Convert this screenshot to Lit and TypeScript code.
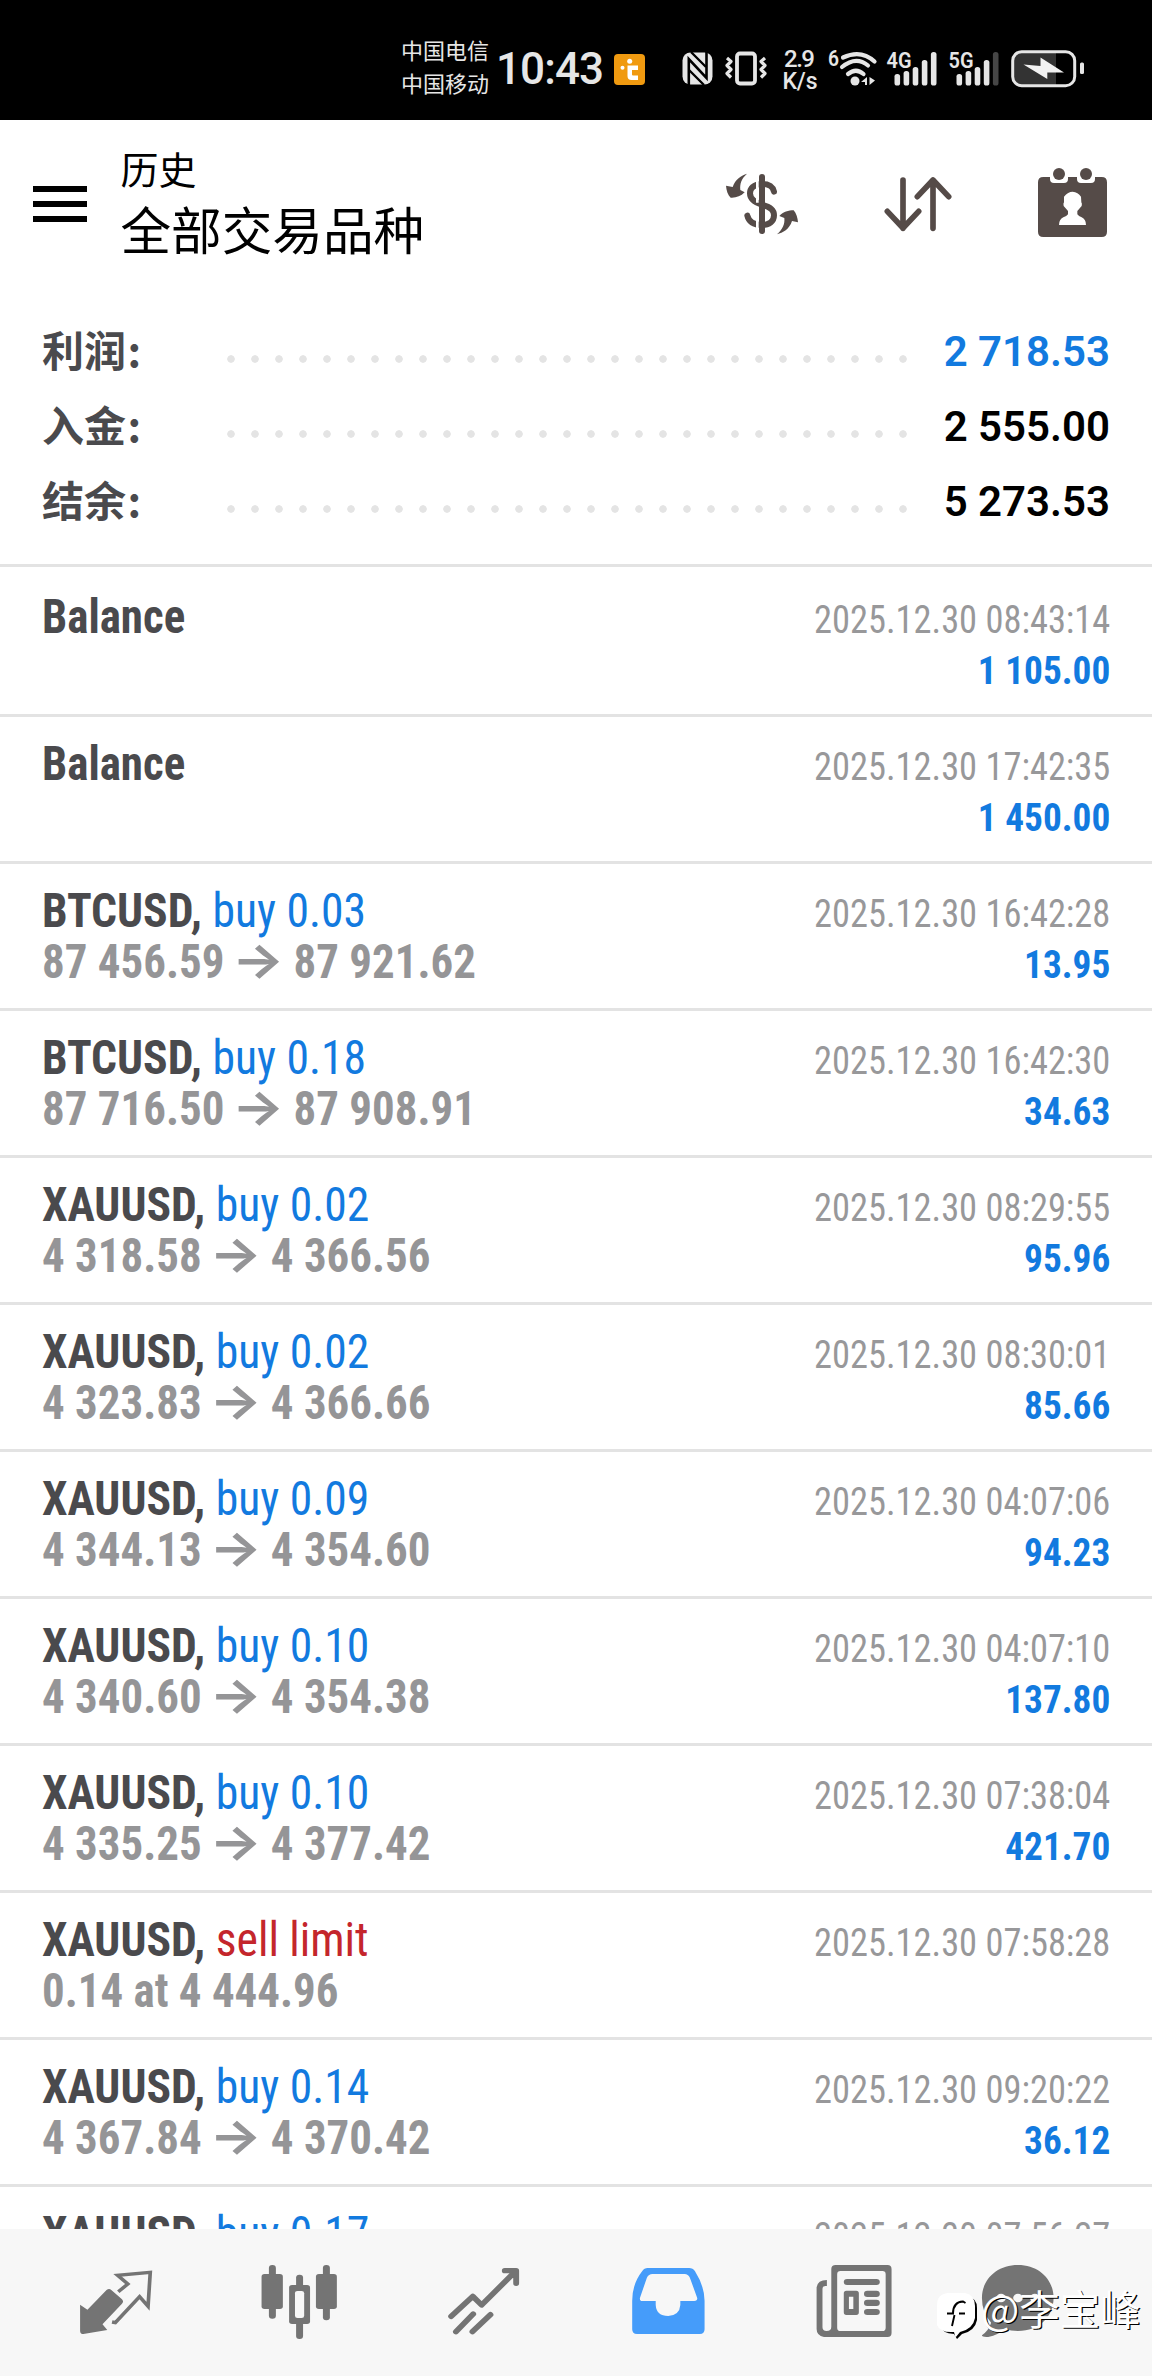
import { LitElement, html, css, svg, nothing } from "lit";
import { customElement } from "lit/decorators.js";

interface Deal {
  symbol: string;
  op?: string;
  sell?: boolean;
  open?: string;
  close?: string;
  note?: string;
  time: string;
  amount?: string;
}

const DEALS: Deal[] = [
  { symbol: "Balance", time: "2025.12.30 08:43:14", amount: "1 105.00" },
  { symbol: "Balance", time: "2025.12.30 17:42:35", amount: "1 450.00" },
  { symbol: "BTCUSD,", op: "buy 0.03", open: "87 456.59", close: "87 921.62", time: "2025.12.30 16:42:28", amount: "13.95" },
  { symbol: "BTCUSD,", op: "buy 0.18", open: "87 716.50", close: "87 908.91", time: "2025.12.30 16:42:30", amount: "34.63" },
  { symbol: "XAUUSD,", op: "buy 0.02", open: "4 318.58", close: "4 366.56", time: "2025.12.30 08:29:55", amount: "95.96" },
  { symbol: "XAUUSD,", op: "buy 0.02", open: "4 323.83", close: "4 366.66", time: "2025.12.30 08:30:01", amount: "85.66" },
  { symbol: "XAUUSD,", op: "buy 0.09", open: "4 344.13", close: "4 354.60", time: "2025.12.30 04:07:06", amount: "94.23" },
  { symbol: "XAUUSD,", op: "buy 0.10", open: "4 340.60", close: "4 354.38", time: "2025.12.30 04:07:10", amount: "137.80" },
  { symbol: "XAUUSD,", op: "buy 0.10", open: "4 335.25", close: "4 377.42", time: "2025.12.30 07:38:04", amount: "421.70" },
  { symbol: "XAUUSD,", op: "sell limit", sell: true, note: "0.14 at 4 444.96", time: "2025.12.30 07:58:28" },
  { symbol: "XAUUSD,", op: "buy 0.14", open: "4 367.84", close: "4 370.42", time: "2025.12.30 09:20:22", amount: "36.12" },
  { symbol: "XAUUSD,", op: "buy 0.17", time: "2025.12.30 07:56:27" },
];

@customElement("app-root")
export class AppRoot extends LitElement {
  static styles = css`
    :host { display: block; font-family: Roboto, "Noto Sans CJK SC", sans-serif; }
    .page { width: 1152px; height: 2376px; background: #fff; overflow: hidden; display: flex; flex-direction: column; }
    .page > * { flex: none; }
  `;
  render() {
    return html`<div class="page">
      <status-bar></status-bar>
      <history-header></history-header>
      <account-summary></account-summary>
      <deal-list></deal-list>
      <bottom-nav></bottom-nav>
    </div>`;
  }
}

@customElement("status-bar")
export class StatusBar extends LitElement {
  static styles = css`
    :host { display: block; height: 120px; background: #000; color: #e6e6e6; font-family: Roboto, "Noto Sans CJK SC", sans-serif; }
    svg { display: block; overflow: visible; }
    .bar { display: flex; height: 120px; padding: 17px 0 0 401px; box-sizing: border-box; align-items: center; }
    .bar > * { flex: none; }
    .carriers { width: 95px; font: 22px/33px "Noto Sans CJK SC", sans-serif; margin-top: -6px; }
    .clock { width: 118px; font-size: 44px; line-height: 60px; font-weight: 480; letter-spacing: -0.9px; }
    .t { font-family: Roboto, sans-serif; fill: #e6e6e6; }
  `;
  render() {
    const bars = (x: number, dim: boolean) =>
      [[73, 0], [70, 1], [66, 2], [59, 3], [51, 4]].map(([y, i]) =>
        svg`<rect x=${x + i * 9.1} y=${y} width="5.6" height=${84.5 - y} rx="2.6" fill=${dim && i === 4 ? "#464646" : "#e6e6e6"}></rect>`);
    return html`<div class="bar">
      <div class="carriers"><div>中国电信</div><div>中国移动</div></div>
      <div class="clock">10:43</div>
      <svg width="472" height="40" viewBox="614 48 472 40">
        <rect x="614" y="53" width="31" height="31" rx="4" fill="#f09a10"></rect>
        <path d="M627.500 64.500H638V69H632V73.500Q632 74.500 633 74.500H638V79H631.500Q627.500 79 627.500 75z" fill="#fff"></path>
        <circle cx="629.700" cy="60.200" r="2.500" fill="#fff"></circle><circle cx="622.500" cy="66.700" r="2" fill="#fff"></circle>
        <rect x="682.500" y="51.500" width="30" height="32" rx="8" fill="#e6e6e6"></rect>
        <path d="M688.800 84V58L706.500 77V51" fill="none" stroke="#000" stroke-width="2.600"></path>
        <path d="M691 51L706 66M689 69L704 84" fill="none" stroke="#000" stroke-width="2.400"></path>
        <rect x="737" y="52.500" width="18" height="30" rx="3" fill="none" stroke="#e6e6e6" stroke-width="3.800"></rect>
        <path d="M727 57l4 3.500-4 4 4 4-4 4 4 4M765 57l-4 3.500 4 4-4 4 4 4-4 4" fill="none" stroke="#e6e6e6" stroke-width="3.200" stroke-linejoin="round"></path>
        <text class="t" x="784" y="66" font-size="24" font-weight="500" textLength="31">2.9</text>
        <text class="t" x="782.500" y="87.500" font-size="23" font-weight="500" textLength="35">K/s</text>
        <text class="t" x="828" y="65" font-size="22" font-weight="600" textLength="11" lengthAdjust="spacingAndGlyphs">6</text>
        <g fill="none" stroke="#e6e6e6" stroke-width="4.200" stroke-linecap="round">
          <path d="M843 56.500q18-8.500 31.500 4"></path><path d="M842 66q14-11.500 26-1.500"></path><path d="M848 73q8-6.500 15.500 0"></path>
        </g>
        <circle cx="855" cy="80" r="4.500" fill="#e6e6e6"></circle>
        <path d="M861 81l6-5v8h-2v-3zM869.500 76v8l5.500-4.500z" fill="#e6e6e6"></path>
        <text class="t" x="886.500" y="67" font-size="22" font-weight="600" textLength="25" lengthAdjust="spacingAndGlyphs">4G</text>
        ${bars(894.5, false)}
        <text class="t" x="948.500" y="67" font-size="22" font-weight="600" textLength="25" lengthAdjust="spacingAndGlyphs">5G</text>
        ${bars(956.5, true)}
        <path d="M1022 51H1056V84H1022Q1013 84 1013 75V60Q1013 51 1022 51z" fill="#333"></path>
        <rect x="1012.700" y="50.700" width="62" height="34" rx="9" fill="none" stroke="#e6e6e6" stroke-width="3"></rect>
        <rect x="1080" y="61.500" width="4" height="11.500" rx="1.500" fill="#e6e6e6"></rect>
        <path d="M1023.500 63.600L1040.500 65V56.500L1064 71.500L1047.300 71.600V78z" fill="#f2f2f2"></path>
      </svg>
    </div>`;
  }
}

@customElement("history-header")
export class HistoryHeader extends LitElement {
  static styles = css`
    :host { display: block; height: 193px; }
    svg { display: block; overflow: visible; }
    .head { display: flex; height: 193px; padding: 20px 45px 0 33px; box-sizing: border-box; color: #000; }
    .menu { width: 54px; margin-top: 46px; display: flex; flex-direction: column; gap: 9px; }
    .menu i { display: block; height: 6px; background: #000; }
    .titles { margin-left: 33.5px; flex: 1; font-family: "Noto Sans CJK SC", sans-serif; }
    .sub { font-size: 38px; line-height: 56px; }
    .main { font-size: 50.6px; line-height: 64px; }
    .icons { margin-top: 22px; }
  `;
  render() {
    return html`<div class="head">
      <div class="menu"><i></i><i></i><i></i></div>
      <div class="titles"><div class="sub">历史</div><div class="main">全部交易品种</div></div>
      <svg class="icons" width="381" height="80" viewBox="78 66 1143 240">
        <g fill="none" stroke="#554b48" stroke-linecap="round" stroke-linejoin="round">
          <path d="M186 111V273" stroke-width="18"></path>
          <path d="M222 155C218 138 207 132 186 132C160 132 150 147 150 160C150 176 160 186 186 194C212 202 222 210 222 226C222 244 208 255 186 255C160 255 146 244 142 227" stroke-width="18"></path>
        </g>
        <path d="M172 112V188M172 204V272" stroke="#fff" stroke-width="8" fill="none"></path>
        <path d="M141 101C124 106 105 118 98 141L78 137C79 152 84 165 92 173C108 174 122 169 134 157L121 150C119 132 124 116 141 101z" fill="#554b48"></path>
        <path d="M231 283C249 278 268 268 276 243L294 247C293 234 289 220 281 211C266 211 249 216 238 228L253 234C255 252 248 268 231 283z" fill="#554b48"></path>
        <path d="M609 120V265M562 214L609 264L656 214M699 265V120M652 170L699 120L746 170" fill="none" stroke="#554b48" stroke-width="17" stroke-linecap="round" stroke-linejoin="round"></path>
        <path d="M1030 111H1050V117Q1050 129 1062 129H1092Q1104 129 1104 117V111H1131V117Q1131 129 1143 129H1173Q1185 129 1185 117V111H1205Q1221 111 1221 127V275Q1221 291 1205 291H1030Q1014 291 1014 275V127Q1014 111 1030 111z" fill="#554b48"></path>
        <circle cx="1077" cy="102" r="18" fill="#554b48"></circle><circle cx="1158" cy="102" r="18" fill="#554b48"></circle>
        <path d="M1092 170Q1104 155 1118 155Q1134 156 1143 170L1144 187Q1147 190 1145 198L1132 213V223Q1136 229 1145 232Q1158 238 1158 255H1077Q1077 238 1090 232Q1100 229 1104 223V213L1091 198Q1089 190 1092 187z" fill="#fff"></path>
      </svg>
    </div>`;
  }
}

@customElement("account-summary")
export class AccountSummary extends LitElement {
  static styles = css`
    :host { display: block; height: 257px; }
    .box { height: 251px; border-bottom: 3px solid #e3e3e3; }
    .line { display: flex; align-items: center; height: 75px; padding: 0 42px; }
    .label { width: 176.5px; font: bold 42px/72px "Noto Sans CJK SC", sans-serif; height: 75px; color: #4a4a4d; }
    .colon { margin-left: 1.5px; }
    .dots { width: 696px; height: 8px; margin-top: 17px; background: radial-gradient(circle, #e4e4e4 3.4px, transparent 4.1px) 0 0 / 24px 8px repeat-x; }
    .value { flex: 1; text-align: right; font: 600 42px/75px Roboto, sans-serif; padding-top: 1px; color: #000; white-space: nowrap; }
    .blue { color: #127adf; }
  `;
  render() {
    const line = (label: string, value: string, blue = false) =>
      html`<div class="line"><div class="label">${label}<span class="colon">:</span></div><div class="dots"></div><div class="value ${blue ? "blue" : ""}">${value}</div></div>`;
    return html`<div class="box">${line("利润", "2 718.53", true)}${line("入金", "2 555.00")}${line("结余", "5 273.53")}</div>`;
  }
}

@customElement("deal-list")
export class DealList extends LitElement {
  static styles = css`
    :host { display: block; height: 1659px; overflow: hidden; font-family: "Roboto Condensed", Roboto, sans-serif; font-stretch: 75%; }
    .deal { height: 147px; box-sizing: border-box; border-bottom: 3px solid #e3e3e3; padding: 21px 42px 0 41.5px; display: flex; justify-content: space-between; white-space: nowrap; }
    .left { font-size: 48px; font-weight: 700; color: #4a4a4d; }
    .right { font-size: 39.5px; text-align: right; color: #98989a; padding-top: 3px; }
    .row { height: 51px; line-height: 51px; }
    .left .row { transform-origin: 0 0; transform: scaleX(0.95); }
    .left .plain, .left .prices { transform: scaleX(0.936); }
    .right .row { transform-origin: 100% 0; transform: scaleX(0.922); }
    .right .amount { font-weight: 700; color: #127adf; transform: scaleX(0.945); }
    .op { font-weight: 400; color: #127adf; }
    .sell { color: #c4262c; }
    .prices { color: #959597; }
    .arrow { display: inline-block; height: 51px; line-height: 47px; vertical-align: top; font-family: Inter, sans-serif; font-weight: 700; font-stretch: normal; font-size: 48px; transform: scaleX(1.23); margin: 0 3.5px 0 2.5px; }
  `;
  render() {
    return html`${DEALS.map((d) => html`<div class="deal">
      <div class="left">
        <div class="row ${d.op ? "" : "plain"}">${d.symbol}${d.op ? html` <span class="op ${d.sell ? "sell" : ""}">${d.op}</span>` : nothing}</div>
        ${d.open ? html`<div class="row prices">${d.open} <span class="arrow">→</span> ${d.close}</div>` : nothing}
        ${d.note ? html`<div class="row prices">${d.note}</div>` : nothing}
      </div>
      <div class="right"><div class="row">${d.time}</div>${d.amount ? html`<div class="row amount">${d.amount}</div>` : nothing}</div>
    </div>`)}`;
  }
}

@customElement("bottom-nav")
export class BottomNav extends LitElement {
  static styles = css`
    :host { display: block; height: 147px; position: relative; background: #f7f7f7; }
    svg { display: block; overflow: visible; }
    .nav { display: grid; grid-template-columns: repeat(6, 184px); justify-items: center; padding: 25px 24px 0; }
    .mark { position: absolute; left: 937px; top: 47px; display: flex; align-items: center; color: #fff; font: 40.5px/60px "Noto Sans CJK SC", sans-serif; white-space: nowrap; }
    .logo { margin-top: 17px; }
    .name { text-shadow: 1.3px 1.3px 0 #000; margin-left: 4px; }
  `;
  render() {
    const g = "#747474";
    const icon = (x: number, body: unknown) =>
      html`<svg width="96" height="96" viewBox="${x} 132 261.300 288" preserveAspectRatio="none">${body}</svg>`;
    return html`<div class="nav">
      ${icon(185.1, svg`
        <path d="M322 245L348 222L320 196L409 187L403 289L380 260L314 338L305 336" fill="none" stroke=${g} stroke-width="10"></path>
        <path d="M290 240Q297 234 303 240L332 268Q338 275 332 281L279 343L292 360L227 372Q218 372 218 362V284L238 299z" fill=${g}></path>`)}
      ${icon(686, svg`
        <g fill=${g}><rect x="732" y="165" width="19" height="161" rx="9"></rect><rect x="712" y="192" width="58" height="105" rx="8"></rect>
        <rect x="806" y="194" width="19" height="193" rx="9"></rect><rect x="787" y="225" width="57" height="117" rx="8"></rect>
        <rect x="879" y="165" width="19" height="166" rx="9"></rect><rect x="860" y="192" width="57" height="105" rx="8"></rect></g>
        <rect x="803" y="243" width="25" height="81" rx="7" fill="#f7f7f7"></rect>`)}
      ${icon(1186.8, svg`
        <path d="M1228 319L1287 259L1311 285L1404 183M1374 182H1405V220M1241 365L1288 312M1286 365L1335 314" fill="none" stroke=${g} stroke-width="16" stroke-linecap="round" stroke-linejoin="round"></path>`)}
      ${icon(119.8, svg`
        <path fill-rule="evenodd" d="M195 174H308Q318 174 324 184Q350 230 350 272V358Q350 372 337 372H166Q153 372 153 358V272Q153 222 180 184Q186 174 195 174zM208 192Q198 192 193 203L174 264Q173 273 181 273H217V285Q219 318 251 318Q282 316 284 285V273H322Q331 273 330 264L310 203Q305 192 296 192z" fill="#459cfa"></path>`)}
      ${icon(620.7, svg`
        <path fill-rule="evenodd" d="M707 165H848Q859 165 859 177V369Q859 381 848 381H675Q655 377 655 357V232Q658 210 683 210V228Q671 226 671 236V352Q671 363 682 363Q695 363 695 350V177Q695 165 707 165zM720 183Q711 183 711 193V353Q711 363 720 363H834Q843 363 843 353V193Q843 183 834 183z" fill=${g}></path>
        <g fill=${g}><rect x="729" y="207" width="98" height="18" rx="9"></rect><path fill-rule="evenodd" d="M736 242H763Q770 242 770 250V307Q770 315 763 315H736Q729 315 729 307V250Q729 242 736 242zM743 260V297H755V260z"></path>
        <rect x="784" y="242" width="43" height="19" rx="9"></rect><rect x="784" y="269" width="43" height="19" rx="9"></rect><rect x="784" y="297" width="43" height="18" rx="9"></rect></g>`)}
      ${icon(1121.5, svg`
        <path d="M1203 165C1262 165 1300 210 1300 264C1300 318 1262 363 1203 363Q1183 363 1168 356Q1150 374 1122 381Q1105 382 1105 376Q1124 360 1130 338Q1105 308 1105 264C1105 210 1144 165 1203 165z" fill=${g}></path>
        <g fill="#f7f7f7"><circle cx="1157" cy="264" r="13"></circle><circle cx="1203" cy="264" r="13"></circle><circle cx="1249" cy="264" r="13"></circle></g>`)}
    </div>
    <div class="mark">
      <svg class="logo" width="40" height="46" viewBox="0 0 40 46">
        <path d="M13 3H30Q40 5 40 15V27Q38 38 25 41L20 46L17 41Q5 40 3 33z" fill="#000"></path>
        <path d="M11 0H28Q38 2 38 13V25Q36 36 23 39L18.500 44.500L17 39Q3 40 0 32V12Q0 1 11 0z" fill="#fff"></path>
        <path d="M10 20.500H16Q16 9 26 8.500L28.500 10M22 20.500H28M17.500 22L15 33" fill="none" stroke="#000" stroke-width="1.900"></path>
      </svg>
      <span class="name">@李宝峰</span>
    </div>`;
  }
}
